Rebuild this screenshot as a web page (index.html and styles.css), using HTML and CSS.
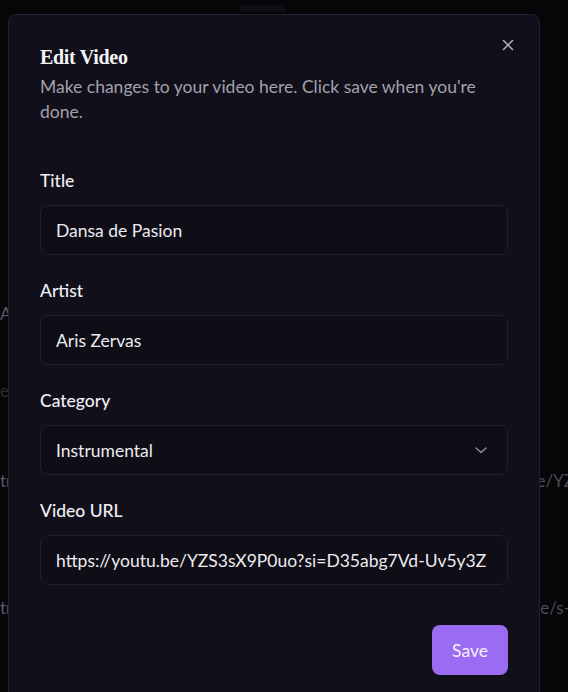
FILE: index.html
```html
<!DOCTYPE html>
<html>
<head>
<meta charset="utf-8">
<link rel="stylesheet" href="styles.css">
</head>
<body>
<div class="page">
  <div class="topbar"><span class="topchip"></span></div>
  <div class="rows">
    <div class="row r1"><span class="cell-l">A</span></div>
    <div class="row r2"><span class="cell-l">e</span></div>
    <div class="row r3"><span class="cell-l">tr</span><span class="cell-r">e/YZ</span></div>
    <div class="row r4"><span class="cell-l">tr</span><span class="cell-r">e/s-l</span></div>
  </div>
</div>
<div class="overlay">
  <div class="dialog">
    <button class="close" aria-label="Close">
      <svg width="16" height="16" viewBox="0 0 16 16" fill="none" stroke="currentColor" stroke-width="1.5" stroke-linecap="round"><path d="M3.5 3.5l9 9M12.5 3.5l-9 9"/></svg>
    </button>
    <div class="header">
      <h2 class="title">Edit Video</h2>
      <p class="desc">Make changes to your video here. Click save when you're done.</p>
    </div>
    <form class="form">
      <div class="field">
        <label class="label">Title</label>
        <div class="input">Dansa de Pasion</div>
      </div>
      <div class="field">
        <label class="label">Artist</label>
        <div class="input">Aris Zervas</div>
      </div>
      <div class="field">
        <label class="label">Category</label>
        <div class="input select"><span>Instrumental</span>
          <svg width="16" height="16" viewBox="0 0 16 16" fill="none" stroke="currentColor" stroke-width="1.5" stroke-linecap="round" stroke-linejoin="round"><path d="M3 6l5 4.5L13 6"/></svg>
        </div>
      </div>
      <div class="field">
        <label class="label">Video URL</label>
        <div class="input">https://youtu.be/YZS3sX9P0uo?si=D35abg7Vd-Uv5y3Z</div>
      </div>
      <div class="actions">
        <button type="button" class="save">Save</button>
      </div>
    </form>
  </div>
</div>
</body>
</html>
```
FILE: styles.css
```css
* { box-sizing: border-box; }
html, body { margin: 0; padding: 0; }
body {
  background: #060508;
  font-family: Lato, "Open Sans", sans-serif;
  width: 568px;
  height: 692px;
  overflow: hidden;
}
.page { width: 568px; height: 692px; overflow: hidden; }
.topbar { height: 14px; display: flex; padding-left: 240px; padding-top: 5px; }
.topchip { width: 46px; height: 7px; background: #0e0d11; }
.rows { padding-top: 288px; }
.row { height: 24px; display: flex; justify-content: space-between; font-size: 17px; line-height: 24px; white-space: nowrap; }
.cell-l { color: #5c5c62; }
.cell-r { color: #4c4c52; margin-right: -6px; }
.r1 { margin-bottom: 53px; }
.r2 { margin-bottom: 66px; }
.r2 .cell-l { color: #2c2b30; }
.r3 { margin-bottom: 103px; }
.overlay {
  position: fixed;
  inset: 0;
  padding: 14px 28px 0 8px;
}
.dialog {
  position: relative;
  background: #110f1a;
  border: 1px solid #24212e;
  border-radius: 8px;
  padding: 31px 31px 32px;
  height: 720px;
}
.close {
  position: absolute;
  top: 22px;
  right: 23px;
  width: 16px;
  height: 16px;
  padding: 0;
  border: 0;
  background: none;
  color: #b5b3bd;
  display: flex;
}
.header { display: flex; flex-direction: column; gap: 6px; }
.title {
  margin: 0;
  font-family: "Liberation Serif", "DejaVu Serif", serif;
  font-weight: 700;
  font-size: 20px;
  line-height: 22px;
  color: #f4f3f6;
  letter-spacing: -0.3px;
}
.desc {
  margin: 0;
  font-size: 17.5px;
  line-height: 25px;
  color: #a3a1ac;
}
.form { display: flex; flex-direction: column; gap: 24px; margin-top: 45px; }
.field { display: flex; flex-direction: column; gap: 12px; }
.label { font-size: 17.5px; line-height: 24px; color: #f1f0f4; font-weight: 500; }
.input {
  height: 50px;
  border: 1px solid #23202d;
  border-radius: 8px;
  background: #0f0d16;
  padding: 0 15px;
  display: flex;
  align-items: center;
  font-size: 17.5px;
  color: #ecebef;
  white-space: nowrap;
  overflow: hidden;
}
.select { justify-content: space-between; }
.select svg { color: #8c8a95; margin-right: 3px; }
.actions { display: flex; justify-content: flex-end; margin-top: 16px; }
.save {
  height: 50px;
  padding: 0 20px;
  border: 0;
  border-radius: 8px;
  background: #9a6cf1;
  color: #f6f1ff;
  font-family: Lato, sans-serif;
  font-size: 17.5px;
}
```
